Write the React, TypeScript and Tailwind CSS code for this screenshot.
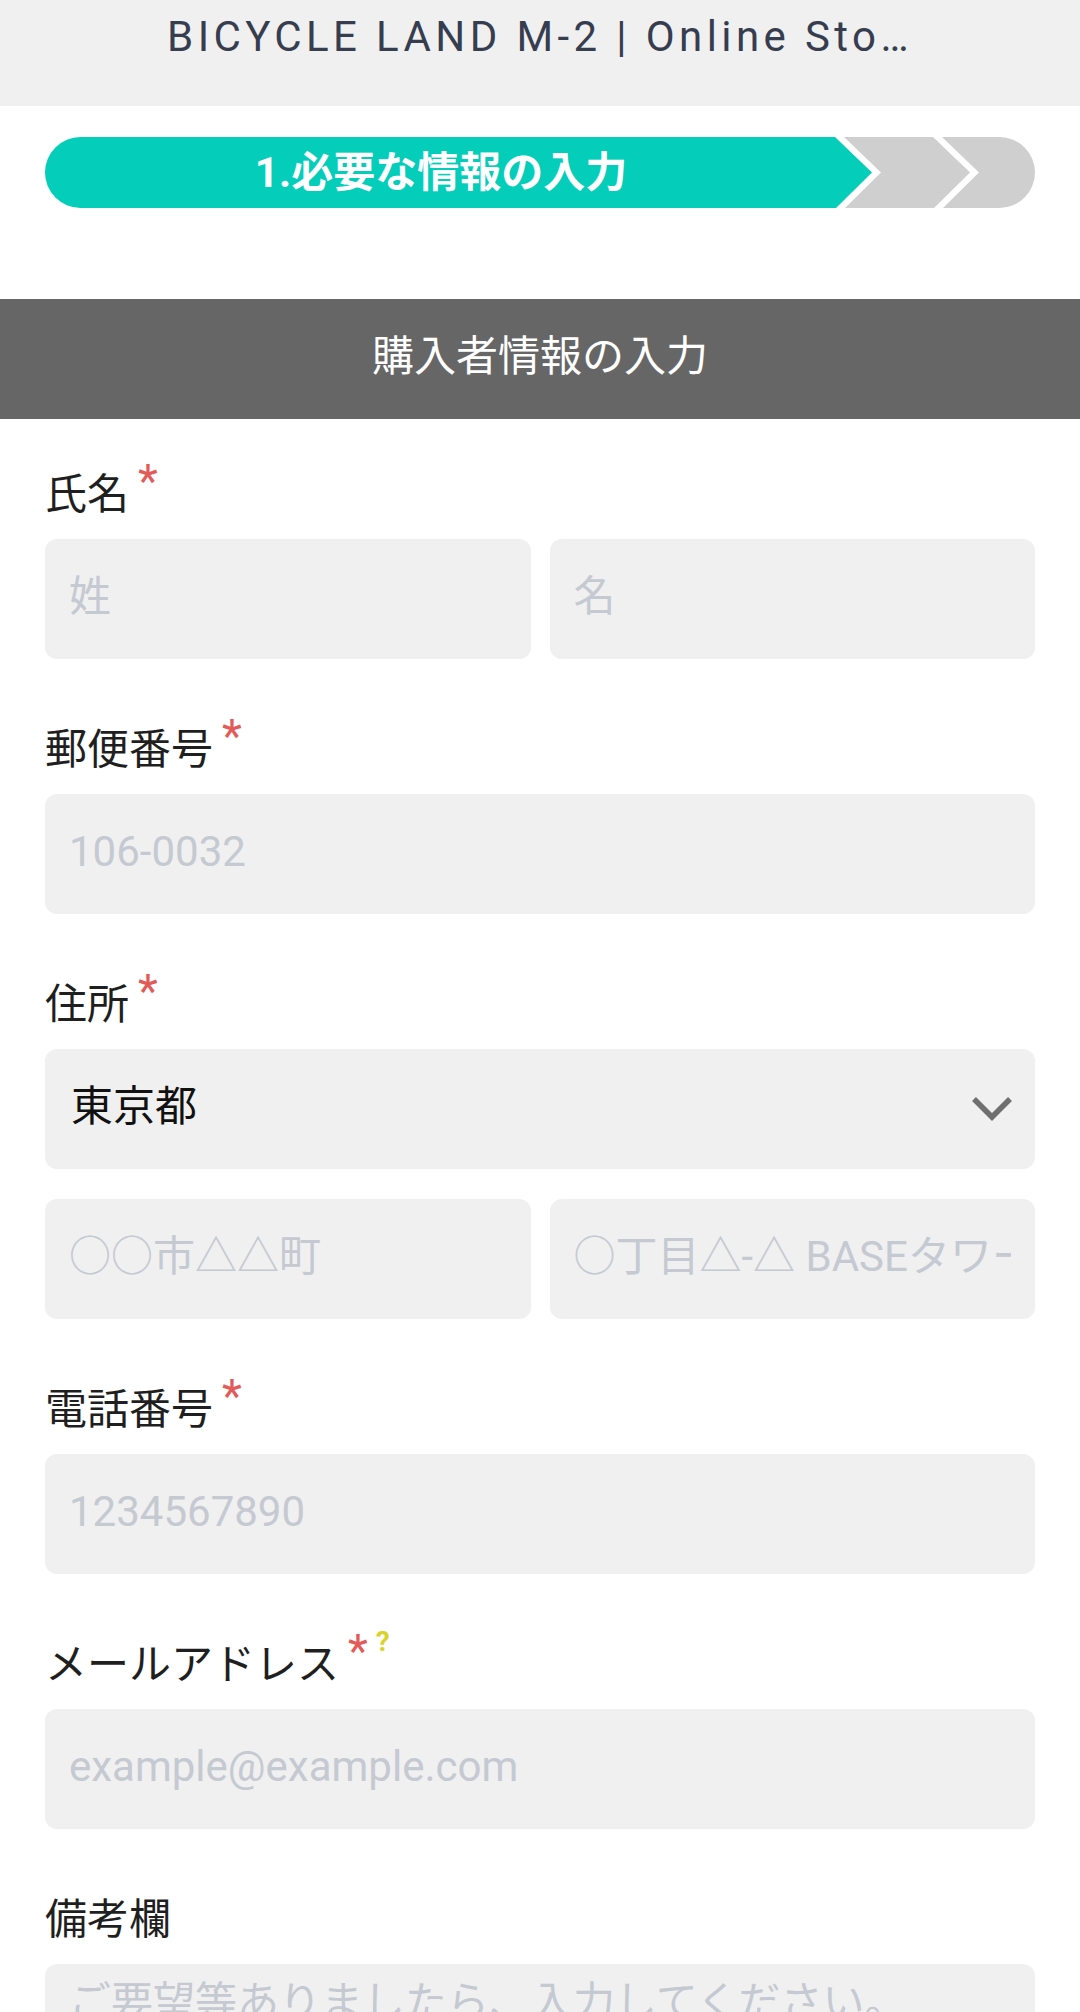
import React from 'react';

const FONT = "font-[family-name:Roboto,'Noto_Sans_CJK_JP',sans-serif]";

// 必須マーク
const Required = () => (
  <span className="ml-[9px] mt-[-12px] inline-block text-[46px] leading-none text-[#e25b58]">*</span>
);

const Label = ({ text, required, help }: { text: string; required?: boolean; help?: boolean }) => (
  <div className="mb-[19px] mt-[-3px] flex items-start">
    <span className="text-[42px] leading-[50px] text-[#1f1f1f]">{text}</span>
    {required && <Required />}
    {help && (
      <span className="ml-[8px] mt-[-12px] inline-block text-[28px] font-bold leading-none text-[#d8d42c]">?</span>
    )}
  </div>
);

const Input = ({ placeholder }: { placeholder: string }) => (
  <input
    type="text"
    placeholder={placeholder}
    className="h-[120px] w-full min-w-0 rounded-[12px] bg-[#f0f0f0] px-[24px] pb-[6px] text-[42px] text-[#222] outline-none placeholder:text-[#c5c9d1]"
  />
);

export default function App() {
  return (
    <div className={`min-h-screen bg-white ${FONT}`}>
      {/* header */}
      <div className="h-[106px] bg-[#f0f0f0] pt-[12px] text-center">
        <p className="whitespace-nowrap text-[42px] leading-[50px] tracking-[4.4px] text-[#363d4f]">
          BICYCLE LAND M-2 | Online Sto…
        </p>
      </div>

      {/* step bar */}
      <div className="px-[45px] pt-[31px]">
        <div className="relative h-[71px] w-full">
          <svg className="absolute inset-0 h-full w-full" viewBox="0 0 990 71" preserveAspectRatio="none">
            <path d="M35.5,0 H790 L827,35.5 L791,71 H35.5 A35.5,35.5 0 0 1 35.5,0 Z" fill="#04cdb9" />
            <path d="M799,0 H888 L925,35.5 L889,71 H800 L836,35.5 Z" fill="#cfcfcf" />
            <path d="M897,0 H954.5 A35.5,35.5 0 0 1 954.5,71 H898 L934,35.5 Z" fill="#cfcfcf" />
          </svg>
          <div className="relative flex h-full w-[792px] items-center justify-center">
            <span className="text-[42px] font-bold leading-[71px] text-white">1.必要な情報の入力</span>
          </div>
        </div>
      </div>

      {/* section title */}
      <div className="mt-[91px] h-[120px] bg-[#666666] text-center text-[42px] leading-[116px] text-white">
        購入者情報の入力
      </div>

      <div className="flex flex-col gap-[69px] px-[45px] pt-[54px]">
        <div>
          <Label text="氏名" required />
          <div className="grid grid-cols-2 gap-[19px]">
            <Input placeholder="姓" />
            <Input placeholder="名" />
          </div>
        </div>

        <div>
          <Label text="郵便番号" required />
          <Input placeholder="106-0032" />
        </div>

        <div>
          <Label text="住所" required />
          <div className="flex h-[120px] items-center justify-between rounded-[12px] bg-[#f0f0f0] pl-[26px] pr-[22px]">
            <span className="pb-[6px] text-[42px] text-[#111]">東京都</span>
            <svg width="42" height="26" viewBox="0 0 42 26">
              <polyline points="3,3 21,21 39,3" fill="none" stroke="#6f6f6f" strokeWidth="5.5" />
            </svg>
          </div>
          <div className="mt-[30px] grid grid-cols-2 gap-[19px]">
            <Input placeholder="○○市△△町" />
            <Input placeholder="○丁目△-△ BASEタワー 〇F" />
          </div>
        </div>

        <div>
          <Label text="電話番号" required />
          <Input placeholder="1234567890" />
        </div>

        <div>
          <Label text="メールアドレス" required help />
          <Input placeholder="example@example.com" />
        </div>

        <div>
          <Label text="備考欄" />
          <textarea
            placeholder="ご要望等ありましたら、入力してください。"
            className="h-[240px] w-full resize-none rounded-[12px] bg-[#f0f0f0] px-[24px] py-[14px] text-[42px] leading-[50px] outline-none placeholder:text-[#c5c9d1]"
          />
        </div>
      </div>
    </div>
  );
}
